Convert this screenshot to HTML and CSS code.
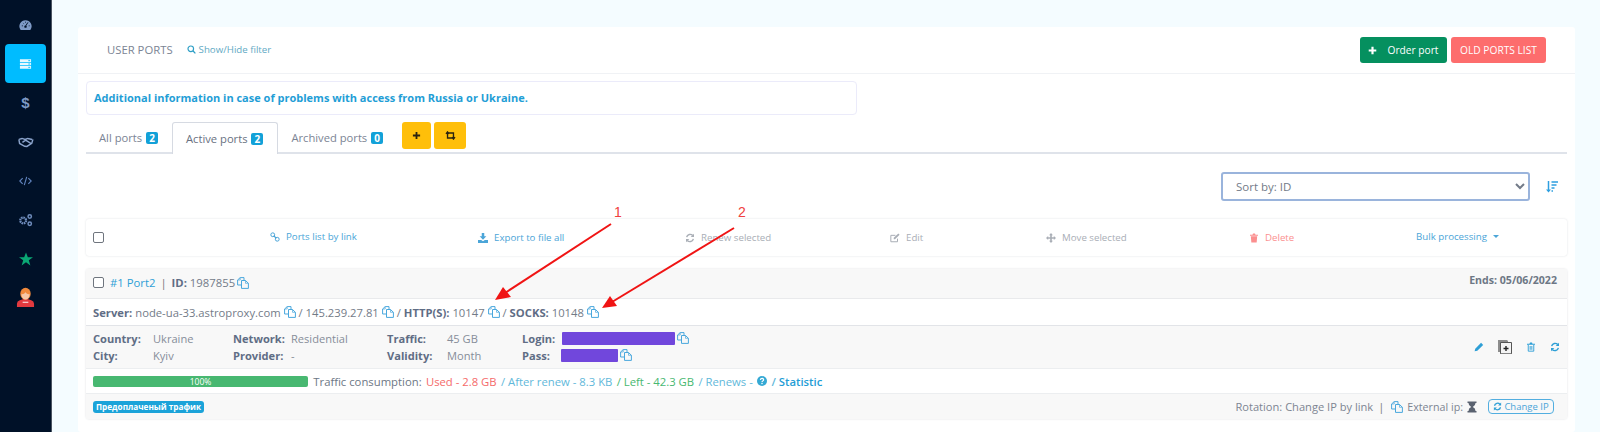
FILE: index.html
```html
<!DOCTYPE html>
<html lang="en">
<head>
<meta charset="utf-8">
<title>User ports</title>
<link rel="stylesheet" href="styles.css">
</head>
<body>
<svg class="defs" xmlns="http://www.w3.org/2000/svg">
  <symbol id="copy" viewBox="0 0 12 12"><path d="M4.500 8H.6V3L3.200.6H7V3.500" fill="none" stroke="currentColor" stroke-width="1"/><path d="M4.500 3.500H8.500L11.400 6.300V11.400H4.500Z" fill="none" stroke="currentColor" stroke-width="1"/><path d="M8.500 3.500V6.300H11.400M.6 3H3.200V.6" fill="none" stroke="currentColor" stroke-width=".7"/></symbol>
  <symbol id="refresh" viewBox="0 0 12 12"><path d="M2 5A4.200 4.200 0 0 1 9.300 3.100" fill="none" stroke="currentColor" stroke-width="1.700"/><path d="M10.800.8V4.800H6.800Z" fill="currentColor"/><path d="M10 7A4.200 4.200 0 0 1 2.700 8.900" fill="none" stroke="currentColor" stroke-width="1.700"/><path d="M1.200 11.200V7.200H5.200Z" fill="currentColor"/></symbol>
  <symbol id="trash" viewBox="0 0 12 12"><path d="M1.200 2H4.200L4.800.7H7.200L7.800 2H10.800V3.200H1.200ZM2.200 3.800H9.800L9.200 11.500H2.800Z" fill="currentColor"/></symbol>
  <symbol id="trash-o" viewBox="0 0 12 12"><path d="M1.200 2H4.200L4.800.7H7.200L7.800 2H10.800V3.200H1.200Z" fill="currentColor"/><path d="M2.700 3.400V11H9.300V3.400M5 4.800V9.400M7 4.800V9.400" fill="none" stroke="currentColor" stroke-width="1.100"/></symbol>
</svg>

<aside class="sidebar">
  <div class="nav-item">
    <svg class="nav-icon" viewBox="0 0 16 14"><path d="M8 1a7.500 7.500 0 0 0-6.400 11.400L2.400 13h11.200l.8-.6A7.500 7.500 0 0 0 8 1Z" fill="#7e9ac6"/><path d="M8.300 8 11 3.800M3.500 8H4.600M12 8h1M5 4.500l.6.6M8 3v1" stroke="#001128" stroke-width="1.200" fill="none"/><circle cx="8" cy="9" r="1.500" fill="#001128"/></svg>
  </div>
  <div class="nav-item is-active">
    <svg class="nav-icon" viewBox="0 0 14 12"><path d="M1 1h12v2.800H1ZM1 4.600h12v2.800H1ZM1 8.200h12V11H1Z" fill="#e6f8ff"/><path d="M10 2.400h2M10 6h2M10 9.600h2" stroke="#00bcff"/></svg>
  </div>
  <div class="nav-item"><span class="nav-dollar">$</span></div>
  <div class="nav-item">
    <svg class="nav-icon wide" viewBox="0 0 18 12"><path d="M1 3 4.500 2 8 3.200 11 2l5 1.200M1 3l.8 4.600 5.700 3.200 2.500.2 5.500-3.600L16.800 3M5 6.500l3.500-2.600 6.400 4" fill="none" stroke="#8aa3cb" stroke-width="1.600"/></svg>
  </div>
  <div class="nav-item">
    <svg class="nav-icon" viewBox="0 0 16 12"><path d="M4.500 2.500 1 6l3.500 3.500M11.500 2.500 15 6l-3.500 3.500M9.500 1 6.500 11" fill="none" stroke="#5f83bd" stroke-width="1.400"/></svg>
  </div>
  <div class="nav-item">
    <svg class="nav-icon gear" viewBox="0 0 16 14"><circle cx="5.500" cy="7.500" r="3.100" fill="none" stroke="#6f8dbd" stroke-width="2.400" stroke-dasharray="1.700 .7"/><circle cx="12.500" cy="3.200" r="1.800" fill="none" stroke="#6f8dbd" stroke-width="1.600"/><circle cx="12.500" cy="11" r="1.800" fill="none" stroke="#6f8dbd" stroke-width="1.600"/></svg>
  </div>
  <div class="nav-item">
    <svg class="nav-star" viewBox="0 0 16 15"><path d="M8 0 10.100 5.500H16L11.200 9 13 15 8 11.300 3 15 4.800 9 0 5.500H5.900Z" fill="#0aa874"/></svg>
  </div>
  <div class="nav-item">
    <svg class="nav-agent" viewBox="0 0 20 22"><path d="M1 21v-3.500Q1 15 4 14l4-1.500h4l4 1.500q3 1 3 3.500V21Z" fill="#e23a3f"/><ellipse cx="10" cy="7" rx="5.500" ry="6.300" fill="#f08a3c"/><path d="M5.500 7.500q1 5.500 4.500 5.500t4.500-5.500q-3 .5-4.500-2-1.500 2.500-4.500 2Z" fill="#f6c7a6"/><path d="M7 16h6" stroke="#fff" stroke-width="1"/></svg>
  </div>
</aside>

<main class="main">
  <section class="panel">
    <header class="panel-head">
      <div class="panel-title">
        <span class="title-text">USER PORTS</span>
        <a class="filter-link"><svg class="ico-search" viewBox="0 0 10 10"><circle cx="4.200" cy="4.200" r="3.100" fill="none" stroke="currentColor" stroke-width="1.300"/><path d="M6.500 6.500 9.300 9.300" stroke="currentColor" stroke-width="1.500"/></svg>Show/Hide filter</a>
      </div>
      <div class="head-actions">
        <button class="btn btn-green"><svg class="ico-plus" viewBox="0 0 10 10"><path d="M5 .8V9.200M.8 5H9.200" stroke="currentColor" stroke-width="2.400"/></svg>Order port</button>
        <button class="btn btn-red">OLD PORTS LIST</button>
      </div>
    </header>

    <div class="panel-body">
      <div class="alert">Additional information in case of problems with access from Russia or Ukraine.</div>

      <div class="tabs">
        <div class="tab">All ports <span class="badge">2</span></div>
        <div class="tab is-active">Active ports <span class="badge">2</span></div>
        <div class="tab">Archived ports <span class="badge">0</span></div>
        <div class="tab-tools">
          <button class="btn-yellow btn-y1"><svg class="ico-y" viewBox="0 0 10 10"><path d="M5 1V9M1 5H9" stroke="#2a2310" stroke-width="2"/></svg></button>
          <button class="btn-yellow btn-y2"><svg class="ico-y wide" viewBox="0 0 12 10"><path d="M1 3.200 2.700 1 4.500 3.200M2.700 1.500V7.800H8M11 6.800 9.300 9 7.500 6.800M9.300 8.500V2.200H4" fill="none" stroke="#2a2310" stroke-width="1.500"/></svg></button>
        </div>
      </div>

      <div class="sort-row">
        <select class="sort-select"><option>Sort by: ID</option></select>
        <svg class="ico-sort" viewBox="0 0 12 12"><path d="M2.500 0V10" stroke="currentColor" stroke-width="1.500"/><path d="M0 8.500H5L2.500 11.500Z" fill="currentColor"/><path d="M5.500 1H12M5.500 4H10.500M5.500 7H8.500M5.500 10H7" stroke="currentColor" stroke-width="1.500"/></svg>
      </div>

      <div class="toolbar">
        <input type="checkbox" class="check">
        <a class="tool"><svg class="ico-13" viewBox="0 0 12 12"><circle cx="3.300" cy="3.300" r="2.300" fill="none" stroke="currentColor" stroke-width="1.200"/><circle cx="8.700" cy="8.700" r="2.300" fill="none" stroke="currentColor" stroke-width="1.200"/><path d="M4.500 4.500 7.500 7.500" stroke="currentColor" stroke-width="1.300"/></svg>Ports list by link</a>
        <a class="tool tool-low"><svg class="ico-13" viewBox="0 0 12 12"><path d="M4.500 0H7.500V4H10L6 8 2 4H4.500ZM0 8.500H3.800L6 10 8.200 8.500H12V12H0Z" fill="currentColor"/></svg>Export to file all</a>
        <a class="tool tool-low is-muted"><svg class="ico-13"><use href="#refresh"/></svg>Renew selected</a>
        <a class="tool tool-low is-muted"><svg class="ico-13" viewBox="0 0 12 12"><path d="M9 6.800V10.500H1V2.800H6.500" fill="none" stroke="currentColor" stroke-width="1.200"/><path d="M4.500 5.800 10 .6 11.500 2 6 7.500H4.500Z" fill="currentColor"/></svg>Edit</a>
        <a class="tool tool-low is-muted"><svg class="ico-13" viewBox="0 0 12 12"><path d="M6 0 8.300 2.600H7V5H9.400V3.700L12 6 9.400 8.300V7H7V9.400H8.300L6 12 3.700 9.400H5V7H2.600V8.300L0 6 2.600 3.700V5H5V2.600H3.700Z" fill="currentColor"/></svg>Move selected</a>
        <a class="tool tool-low is-danger"><svg class="ico-13"><use href="#trash"/></svg>Delete</a>
        <a class="tool">Bulk processing<span class="caret"></span></a>
      </div>

      <article class="port">
        <div class="port-head">
          <div class="port-id">
            <input type="checkbox" class="check">
            <a class="port-name">#1 Port2</a>
            <span class="bar">|</span>
            <span><b>ID:</b> 1987855</span>
            <svg class="ico-copy tight"><use href="#copy"/></svg>
          </div>
          <b class="port-ends">Ends: 05/06/2022</b>
        </div>

        <div class="port-server">
          <b>Server:</b>&nbsp;node-ua-33.astroproxy.com<svg class="ico-copy"><use href="#copy"/></svg>&nbsp;/ 145.239.27.81<svg class="ico-copy"><use href="#copy"/></svg>&nbsp;/&nbsp;<b>HTTP(S):</b>&nbsp;10147<svg class="ico-copy"><use href="#copy"/></svg>&nbsp;/&nbsp;<b>SOCKS:</b>&nbsp;10148<svg class="ico-copy"><use href="#copy"/></svg>
        </div>

        <div class="port-details">
          <div class="details-grid">
            <b>Country:</b><span>Ukraine</span>
            <b>Network:</b><span>Residential</span>
            <b>Traffic:</b><span>45 GB</span>
            <b>Login:</b><span class="secret-wrap"><i class="secret secret-login"></i><svg class="ico-copy"><use href="#copy"/></svg></span>
            <b>City:</b><span>Kyiv</span>
            <b>Provider:</b><span>-</span>
            <b>Validity:</b><span>Month</span>
            <b>Pass:</b><span class="secret-wrap"><i class="secret secret-pass"></i><svg class="ico-copy"><use href="#copy"/></svg></span>
          </div>
          <div class="row-actions">
            <svg class="act" viewBox="0 0 12 12"><path d="M8.500 1 11 3.500 4 10.500.8 11.200 1.500 8Z" fill="currentColor"/></svg>
            <svg class="act-doc" viewBox="0 0 14 14"><path d="M0 0H9L10 1V12H0Z" fill="#8d8d8d"/><path d="M2.500 2.500H13.500V13.800H2.500Z" fill="#f4f4f4" stroke="#555" stroke-width="1"/><path d="M8 6V11M5.500 8.500H10.500" stroke="#222" stroke-width="1.400"/></svg>
            <svg class="act"><use href="#trash-o"/></svg>
            <svg class="act"><use href="#refresh"/></svg>
          </div>
        </div>

        <div class="port-traffic">
          <div class="progress">100%</div>
          <span class="tr-label">Traffic consumption:</span>
          <span class="tr-red">Used - 2.8 GB</span>
          <span class="tr-blue">/ After renew - 8.3 KB</span>
          <span class="tr-green">/ Left - 42.3 GB</span>
          <span class="tr-blue">/ Renews -</span>
          <svg class="ico-q" viewBox="0 0 12 12"><circle cx="6" cy="6" r="6" fill="currentColor"/><path d="M4 4.600Q4.200 2.800 6.100 2.800 8 2.900 8 4.400 8 5.400 6.800 5.900 6 6.300 6 7.200" fill="none" stroke="#fff" stroke-width="1.400"/><rect x="5.200" y="8.200" width="1.600" height="1.600" fill="#fff"/></svg>
          <span class="tr-stat"><span class="tr-blue">/</span> Statistic</span>
        </div>

        <div class="port-foot">
          <span class="tag">Предоплаченый трафик</span>
          <div class="foot-right">
            <span>Rotation: Change IP by link</span>
            <span class="bar">|</span>
            <svg class="ico-copy flush"><use href="#copy"/></svg>
            <span class="ext-label">External ip:</span>
            <svg class="ico-glass" viewBox="0 0 10 12"><path d="M.5.500H9.500V2H8.500Q8.500 4.800 5.800 6 8.500 7.200 8.500 10H9.500V11.500H.5V10H1.500Q1.500 7.200 4.200 6 1.500 4.800 1.500 2H.5Z" fill="#5a6270"/></svg>
            <a class="change-ip"><svg class="ico-ref"><use href="#refresh"/></svg>Change IP</a>
          </div>
        </div>
      </article>
    </div>
  </section>
</main>

<svg class="annot" viewBox="0 0 1600 432" xmlns="http://www.w3.org/2000/svg">
  <text x="614" y="217" class="annot-num">1</text>
  <text x="738" y="217" class="annot-num">2</text>
  <path d="M611 224 505 293" stroke="#f01414" stroke-width="2" fill="none"/>
  <path d="M495 300 503 287 511 297Z" fill="#f01414"/>
  <path d="M734 228 612 302" stroke="#f01414" stroke-width="2" fill="none"/>
  <path d="M602 308 610 296 617 306Z" fill="#f01414"/>
</svg>
</body>
</html>
```

FILE: styles.css
```css
* { box-sizing: border-box; }
html, body { margin: 0; height: 432px; overflow: hidden; }
body {
  display: flex;
  position: relative;
  background: #f4fcff;
  font-family: "Open Sans", "Liberation Sans", sans-serif;
  font-size: 11.100px;
  color: #737b88;
}
a { color: #2e9fd6; text-decoration: none; }
b { font-weight: 700; color: #5f6d85; }
.defs { display: none; }

.sidebar {
  width: 52px;
  flex: none;
  background: #001128;
  border-right: 1px solid #4a5361;
  padding-top: 5px;
  display: flex;
  flex-direction: column;
}
.nav-item { height: 39px; margin: 0 5px 0 5px; display: flex; align-items: center; justify-content: center; border-radius: 4px; }
.nav-item.is-active { background: #00bcff; }
.nav-icon { width: 13px; height: 12px; }
.nav-icon.wide { width: 16px; }
.nav-icon.gear { width: 15px; height: 14px; }
.nav-dollar { color: #7e9ac6; font: 700 15px "Liberation Sans", sans-serif; }
.nav-star { width: 14px; height: 14px; }
.nav-agent { width: 19px; height: 21px; }

.main { flex: 1; padding: 27px 25px 0 26px; min-width: 0; height: 432px; overflow: hidden; }
.panel { background: #fff; border-radius: 3px; height: 405px; }
.panel-head {
  height: 47px;
  border-bottom: 1px solid #f0f2f5;
  display: flex;
  justify-content: space-between;
  align-items: center;
  padding: 0 29px 0 29px;
}
.panel-title { display: flex; align-items: baseline; gap: 14px; margin-top: -2px; }
.title-text { font-size: 11.300px; color: #7b8494; }
.filter-link { font-size: 9.700px; color: #62a9c4; display: inline-flex; align-items: center; gap: 3px; }
.ico-search { width: 9px; height: 9px; color: #2e9fc6; }
.head-actions { display: flex; gap: 4px; }
.btn { border: 0; height: 26px; border-radius: 3px; color: #fff; font: 10.200px "Open Sans", sans-serif; padding: 0; }
.btn-green { background: #05905f; width: 87px; display: flex; align-items: center; justify-content: center; gap: 10px; }
.btn-red { background: #fd6d6d; width: 95px; }
.ico-plus { width: 9px; height: 9px; }

.panel-body { padding: 7px 8px 0; }
.alert {
  width: 771px;
  height: 34px;
  border: 1px solid #ebebfa;
  border-radius: 4px;
  padding: 0 7px 2px;
  display: flex;
  align-items: center;
  font-weight: 700;
  font-size: 11px;
  color: #1f9ed6;
}

.tabs { margin-top: 7px; height: 32px; border-bottom: 2px solid #dfe3ea; display: flex; }
.tab { height: 32px; padding: 8px 14px 0 13px; font-size: 11.200px; color: #7b8494; }
.tab.is-active { background: #fff; border: 1px solid #d6dae2; border-bottom: 0; border-radius: 3px 3px 0 0; color: #69717f; height: 32px; }
.badge { display: inline-block; background: #12a1d8; color: #fff; font-weight: 700; font-size: 10px; line-height: 12px; width: 12px; text-align: center; border-radius: 2px; margin-left: 1px; }
.tab-tools { display: flex; gap: 3px; margin-left: 5px; }
.btn-yellow { background: #ffbf0a; border: 0; border-radius: 3px; height: 27px; padding: 0; display: flex; align-items: center; justify-content: center; }
.btn-y1 { width: 29px; }
.btn-y2 { width: 32px; }
.ico-y { width: 9px; height: 9px; }
.ico-y.wide { width: 11px; }

.sort-row { margin-top: 18px; display: flex; justify-content: flex-end; align-items: center; gap: 16px; padding-right: 9px; }
.sort-select {
  width: 309px;
  height: 29px;
  border: 2px solid #9ab4dc;
  border-radius: 3px;
  background: #fff;
  color: #737b88;
  font: 11.500px "Open Sans", sans-serif;
  padding-left: 9px;
}
.ico-sort { width: 12px; height: 12px; color: #2e9fe0; }

.toolbar {
  margin-top: 18px;
  height: 37px;
  background: #fff;
  border-radius: 3px;
  box-shadow: 0 0 2px rgba(60, 70, 90, .18);
  display: grid;
  grid-template-columns: 177px 208px 207px 205px 156px 203px 167px auto;
  align-items: center;
  padding-left: 7px;
}
.toolbar .check { margin-top: -1px; }
.check { appearance: none; width: 11px; height: 11px; margin: 0; border: 1px solid #6f757e; border-radius: 2px; background: #fff; }
.tool { display: inline-flex; align-items: center; gap: 6px; font-size: 9.700px; color: #4ba5d8; margin-top: -2px; }
.tool-low { margin-top: 0; }
.tool.is-muted { color: #a9aeb6; }
.tool.is-danger { color: #fb8f8f; }
.ico-13 { width: 10px; height: 10px; flex: none; }
.caret { width: 0; height: 0; border: 3.500px solid transparent; border-top-color: currentColor; border-bottom: 0; }

.port {
  margin-top: 13px;
  height: 150px;
  border-radius: 3px;
  box-shadow: 0 0 2px rgba(60, 70, 90, .2);
  display: flex;
  flex-direction: column;
}
.port-head { height: 30px; background: #f8f8f8; border-bottom: 1px solid #e9eaec; display: flex; justify-content: space-between; padding: 0 10px 0 7px; }
.port-id { display: flex; align-items: center; gap: 4px; margin-top: -2px; font-size: 11.300px; }
.port-id .port-name { margin-left: 2px; }
.port-name { color: #2e9fd6; }
.bar { color: #777; margin: 0 1px; }
.port-ends { align-self: center; margin-top: -8px; font-size: 10.600px; color: #6d7785; }
.ico-copy { width: 12px; height: 12px; color: #49a7dd; margin-left: 3px; flex: none; }
.ico-copy.tight { margin-left: -2px; }
.ico-copy.flush { margin-left: 2px; }
.port-server { height: 27px; background: #fff; border-bottom: 1px solid #e2e4e8; display: flex; align-items: center; padding-left: 7px; font-size: 11.250px; }
.port-details { height: 43px; background: #f8f8f8; border-bottom: 1px solid #eceef0; display: flex; justify-content: space-between; align-items: center; padding: 0 7px; }
.details-grid { display: grid; grid-template-columns: 60px 80px 58px 96px 60px 75px 40px 160px; row-gap: 3px; line-height: 14px; color: #868d99; }
.secret-wrap { display: flex; align-items: center; }
.secret { display: block; height: 13px; background: #7147dc; border-radius: 1px; }
.secret-login { width: 113px; }
.secret-pass { width: 57px; margin-left: -1px; }
.secret-wrap .ico-copy { margin-left: 2px; margin-top: -2px; }
.row-actions { display: flex; align-items: center; gap: 14px; color: #2e9fd6; }
.act { width: 10px; height: 10px; }
.act-doc { width: 14px; height: 14px; }
.port-traffic { height: 25px; background: #fff; border-bottom: 1px solid #eceef0; display: flex; align-items: center; gap: 4.300px; padding-left: 7px; font-size: 11.300px; }
.progress { width: 215px; height: 11px; background: #48b871; color: #fff; font-size: 8.500px; line-height: 11px; text-align: center; border-radius: 2px; margin-right: 1px; }
.tr-label { color: #6d7785; }
.tr-red { color: #f56a6a; }
.tr-blue { color: #5fb8da; }
.tr-green { color: #48b871; }
.tr-stat { color: #1f9ed6; font-weight: 600; }
.ico-q { width: 10px; height: 10px; color: #35a9d4; }
.port-foot { flex: 1; background: #f8f8f8; display: flex; justify-content: space-between; align-items: center; padding: 0 13px 0 7px; }
.tag { background: #1ba3d9; color: #fff; font-weight: 700; font-size: 8.200px; line-height: 12px; height: 12px; padding: 0 3px; border-radius: 3px; }
.foot-right { display: flex; align-items: center; gap: 4px; color: #7d8592; }
.ext-label { font-size: 10.700px; }
.ico-glass { width: 10px; height: 12px; }
.change-ip { display: inline-flex; align-items: center; gap: 2px; height: 15px; width: 66px; justify-content: center; border: 1px solid #52aee0; border-radius: 4px; font-size: 9.500px; color: #4ba5d8; margin-left: 7px; }
.ico-ref { width: 9px; height: 9px; color: #2e9fd6; }

.annot { position: absolute; left: 0; top: 0; width: 1600px; height: 432px; pointer-events: none; }
.annot-num { fill: #f04040; font: 14px "Liberation Sans", sans-serif; }
```
